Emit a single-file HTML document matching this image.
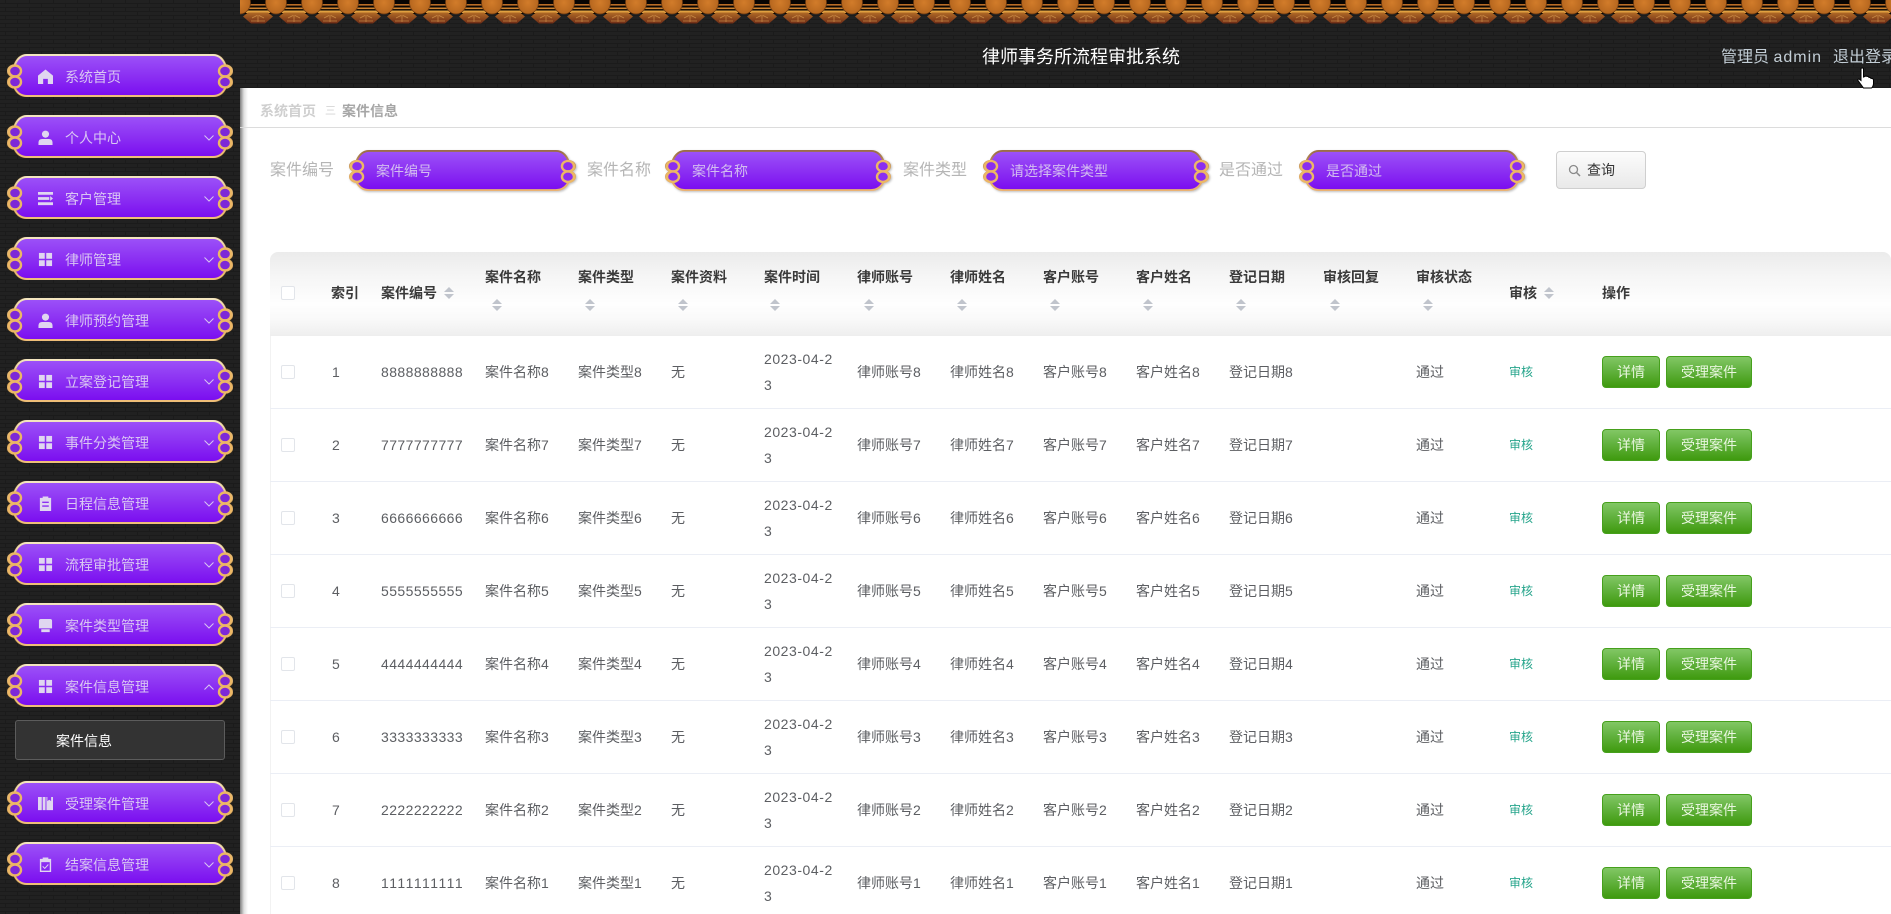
<!DOCTYPE html>
<html lang="zh">
<head>
<meta charset="utf-8">
<title>律师事务所流程审批系统</title>
<style>
*{box-sizing:border-box;margin:0;padding:0}
html,body{width:1891px;height:914px;overflow:hidden;background:#fff;font-family:"Liberation Sans","Noto Sans CJK SC",sans-serif;font-size:14px;font-kerning:none}
#wrap{position:relative;width:1891px;height:914px;overflow:hidden}
.a{position:absolute;white-space:nowrap}
#tex{position:absolute;left:0;top:0;width:1891px;height:914px}
#main{position:absolute;left:240px;top:88px;width:1651px;height:826px;background:#fff}
#sh{position:absolute;left:240px;top:88px;width:8px;height:826px;background:linear-gradient(to right,rgba(0,0,0,.5),rgba(0,0,0,.12) 50%,rgba(0,0,0,0))}
.m{position:absolute;left:7px;width:226px;height:43px}
.m>svg.b{position:absolute;left:0;top:0;width:226px;height:43px;overflow:visible}
.m>svg.i{position:absolute;left:30.5px;top:15px;width:15px;height:15px;fill:#e0d6f0}
.m>span{position:absolute;left:58px;top:2px;line-height:43px;font-size:14px;color:#d9c6f3;white-space:nowrap}
.m>svg.c{position:absolute;left:197px;top:20px;width:10px;height:6px;fill:none;stroke:#d8c4f2;stroke-width:1}
.inp{position:absolute;top:150px;height:41px}
.inp svg{position:absolute;left:0;top:0;width:100%;height:100%;overflow:visible}
.inp span{position:absolute;left:27px;top:1px;line-height:40px;color:#d3bdf0;font-size:14px;white-space:nowrap}
.lab{position:absolute;top:159px;font-size:16px;line-height:24px;color:#b5b5b5;white-space:nowrap}
#th{position:absolute;left:270px;top:252px;width:1621px;height:84px;border-radius:8px 8px 0 0;background:linear-gradient(#ebebeb 0,#f6f6f6 30%,#fefefe 62%,#f9f9f9 80%,#eeeeee 100%)}
.h{position:absolute;font-weight:bold;color:#3a3a3a;font-size:14px;line-height:20px;white-space:nowrap}
.s{position:absolute;width:10px;height:12px}
.s:before,.s:after{content:"";position:absolute;left:0;border-left:5px solid transparent;border-right:5px solid transparent}
.s:before{top:0;border-bottom:5px solid #c0c4cc}
.s:after{top:7px;border-top:5px solid #c0c4cc}
.cb{position:absolute;width:14px;height:14px;border:1px solid #e2e5ea;border-radius:2px;background:#fff}
.r{position:absolute;left:270px;width:1621px;height:73px;border-bottom:1px solid #ebeef5;box-shadow:inset 1px 0 0 #f2f2f2;color:#606266;background:#fff}
.r>*{position:absolute}
.r>span{top:0;line-height:72px;white-space:nowrap;color:#5c5e62}
.r>span.n{letter-spacing:.42px}
.r>span.d{top:10px;line-height:26px;letter-spacing:.55px}
.r>span.k{font-size:12px;color:#27a58c}
.r>b{top:20px;height:32px;line-height:30px;text-align:center;font-weight:normal;font-size:14px;color:#e9f6df;border:1px solid #46a01c;border-radius:4px;background:linear-gradient(#82c765,#62b23f 45%,#3f9a0e)}
.c1{left:62px}.c2{left:111px}.c3{left:215px}.c4{left:308px}.c5{left:401px}.c7{left:587px}.c8{left:680px}.c9{left:773px}.c10{left:866px}.c11{left:959px}.c13{left:1146px}.c14{left:1239px}
.b1{left:1332px;width:58px}.b2{left:1396px;width:86px}
.r>i.cb{left:11px;top:29px}
.r>span.d{left:494px}
</style>
</head>
<body>
<div id="wrap">
<svg width="0" height="0" style="position:absolute">
<defs>
<linearGradient id="pf" x1="0" y1="0" x2="0" y2="1"><stop offset="0" stop-color="#9c52f8"/><stop offset=".55" stop-color="#8a2df2"/><stop offset="1" stop-color="#7a0cf0"/></linearGradient>
<linearGradient id="gs" x1="0" y1="0" x2="0" y2="1"><stop offset="0" stop-color="#f4e6c0"/><stop offset=".5" stop-color="#d9a860"/><stop offset="1" stop-color="#efbe78"/></linearGradient>
<linearGradient id="gi" x1="0" y1="0" x2="0" y2="1"><stop offset="0" stop-color="#9a6c48"/><stop offset=".5" stop-color="#d8a660"/><stop offset="1" stop-color="#eab273"/></linearGradient>
<linearGradient id="hexg" x1="0" y1="0" x2="0" y2="1"><stop offset="0" stop-color="#b06a26"/><stop offset="1" stop-color="#6e2c16"/></linearGradient>
<radialGradient id="ovg" cx=".5" cy=".5" r=".6"><stop offset="0" stop-color="#d27c2a"/><stop offset="1" stop-color="#b0621c"/></radialGradient>
<path id="shape" d="M20 1H206C212 1 216 5 218.500 11.500A6.500 5.500 0 0 1 218.500 22.500A6.500 5.500 0 0 1 218.500 33.500C216 39 212 42 206 42H20C14 42 10 39 7.500 33.500A6.500 5.500 0 0 1 7.500 22.500A6.500 5.500 0 0 1 7.500 11.500C10 5 14 1 20 1Z"/>
<symbol id="mb" viewBox="0 0 226 43" preserveAspectRatio="none">
<use href="#shape" fill="#a87030" stroke="#7a5a28" stroke-width="3" opacity=".6"/>
<use href="#shape" fill="url(#pf)" stroke="url(#gs)" stroke-width="2"/>
<g fill="#7d28d8" stroke="#ecb765" stroke-width="2.400"><ellipse cx="8" cy="17" rx="6" ry="5.500"/><ellipse cx="8" cy="28" rx="6" ry="5.500"/><ellipse cx="218" cy="17" rx="6" ry="5.500"/><ellipse cx="218" cy="28" rx="6" ry="5.500"/></g>
</symbol>
<symbol id="ib" viewBox="0 0 226 43" preserveAspectRatio="none">
<use href="#shape" fill="url(#pf)" stroke="url(#gi)" stroke-width="2"/>
<g fill="#8a2df0" stroke="#ecb765" stroke-width="2.400"><ellipse cx="8" cy="17" rx="6" ry="5.500"/><ellipse cx="8" cy="28" rx="6" ry="5.500"/><ellipse cx="218" cy="17" rx="6" ry="5.500"/><ellipse cx="218" cy="28" rx="6" ry="5.500"/></g>
</symbol>
<symbol id="grid" viewBox="0 0 16 16"><rect x="1" y="1" width="6.200" height="6.200"/><rect x="8.800" y="1" width="6.200" height="6.200"/><rect x="1" y="8.800" width="6.200" height="6.200"/><rect x="8.800" y="8.800" width="6.200" height="6.200"/></symbol>
<symbol id="user" viewBox="0 0 16 16"><circle cx="8" cy="4.400" r="3.800"/><path d="M0.500 16V13.500Q.5 9.600 4.500 9.600H11.500Q15.500 9.600 15.500 13.500V16Z"/></symbol>
<pattern id="brick" width="24" height="8" patternUnits="userSpaceOnUse">
<rect width="24" height="8" fill="#212121"/>
<path d="M0 3.500H24M0 7.500H24M5.500 0V3.500M17.500 4V7.500" stroke="#1b1b1b" stroke-width="1"/>
</pattern>
<pattern id="roof" x="240" y="0" width="36" height="24" patternUnits="userSpaceOnUse">
<rect width="36" height="14" fill="#080503"/>
<rect x="6" y="4" width="24" height="1.600" fill="#b86c26"/>
<rect x="6" y="7.500" width="24" height="1.600" fill="#cc8230"/>
<rect x="6" y="10.500" width="24" height="2.500" fill="#e0a040"/>
<polygon points="8,12.500 28,12.500 33,16.500 25,23.500 11,23.500 3,16.500" fill="url(#hexg)"/>
<path d="M12 18L17 15.500M24 18L19 15.500M11 21H25M18 15V22" stroke="#d8984e" stroke-width=".8" fill="none" opacity=".75"/>
<ellipse cx="0" cy="2.500" rx="10.500" ry="11.500" fill="url(#ovg)" stroke="#6e3a10" stroke-width=".8"/>
<ellipse cx="36" cy="2.500" rx="10.500" ry="11.500" fill="url(#ovg)" stroke="#6e3a10" stroke-width=".8"/>
</pattern>
</defs>
</svg>

<svg id="tex"><rect width="1891" height="914" fill="url(#brick)"/><rect x="240" width="1651" height="24" fill="url(#roof)"/></svg>

<div class="a" style="left:982px;top:44px;font-size:18px;line-height:26px;color:#fff">律师事务所流程审批系统</div>
<div class="a" style="left:1721px;top:47px;font-size:16px;line-height:22px;color:#c3ced6">管理员 <span style="letter-spacing:1px">admin</span></div>
<div class="a" style="left:1833px;top:47px;font-size:16px;line-height:22px;color:#c3ced6">退出登录</div>

<div class="m" style="top:54px"><svg class="b"><use href="#mb" width="226" height="43"/></svg><svg class="i" viewBox="0 0 16 16"><path d="M8 .5L16 7V16H10.500V10.500H5.500V16H0V7Z"/></svg><span>系统首页</span></div>
<div class="m" style="top:115px"><svg class="b"><use href="#mb" width="226" height="43"/></svg><svg class="i"><use href="#user" width="15" height="15"/></svg><span>个人中心</span><svg class="c" viewBox="0 0 10 6"><path d="M.5.5L5 5L9.500.5"/></svg></div>
<div class="m" style="top:176px"><svg class="b"><use href="#mb" width="226" height="43"/></svg><svg class="i" viewBox="0 0 16 16"><path d="M0 1H16V4H0ZM0 6.500H12V9.500H0ZM13 5.500L16 8L13 10.500ZM0 12H16V15H0Z"/></svg><span>客户管理</span><svg class="c" viewBox="0 0 10 6"><path d="M.5.5L5 5L9.500.5"/></svg></div>
<div class="m" style="top:237px"><svg class="b"><use href="#mb" width="226" height="43"/></svg><svg class="i"><use href="#grid" width="15" height="15"/></svg><span>律师管理</span><svg class="c" viewBox="0 0 10 6"><path d="M.5.5L5 5L9.500.5"/></svg></div>
<div class="m" style="top:298px"><svg class="b"><use href="#mb" width="226" height="43"/></svg><svg class="i"><use href="#user" width="15" height="15"/></svg><span>律师预约管理</span><svg class="c" viewBox="0 0 10 6"><path d="M.5.5L5 5L9.500.5"/></svg></div>
<div class="m" style="top:359px"><svg class="b"><use href="#mb" width="226" height="43"/></svg><svg class="i"><use href="#grid" width="15" height="15"/></svg><span>立案登记管理</span><svg class="c" viewBox="0 0 10 6"><path d="M.5.5L5 5L9.500.5"/></svg></div>
<div class="m" style="top:420px"><svg class="b"><use href="#mb" width="226" height="43"/></svg><svg class="i"><use href="#grid" width="15" height="15"/></svg><span>事件分类管理</span><svg class="c" viewBox="0 0 10 6"><path d="M.5.5L5 5L9.500.5"/></svg></div>
<div class="m" style="top:481px"><svg class="b"><use href="#mb" width="226" height="43"/></svg><svg class="i" viewBox="0 0 16 16"><path fill-rule="evenodd" d="M2 2H5V.5H11V2H14V16H2ZM4.500 6V7.500H11.500V6ZM4.500 10V11.500H11.500V10Z"/></svg><span>日程信息管理</span><svg class="c" viewBox="0 0 10 6"><path d="M.5.5L5 5L9.500.5"/></svg></div>
<div class="m" style="top:542px"><svg class="b"><use href="#mb" width="226" height="43"/></svg><svg class="i"><use href="#grid" width="15" height="15"/></svg><span>流程审批管理</span><svg class="c" viewBox="0 0 10 6"><path d="M.5.5L5 5L9.500.5"/></svg></div>
<div class="m" style="top:603px"><svg class="b"><use href="#mb" width="226" height="43"/></svg><svg class="i" viewBox="0 0 16 16"><path d="M3 1H13Q15 1 15 3V11H1V3Q1 1 3 1ZM3.500 12H12.500V15H3.500Z"/></svg><span>案件类型管理</span><svg class="c" viewBox="0 0 10 6"><path d="M.5.5L5 5L9.500.5"/></svg></div>
<div class="m" style="top:664px"><svg class="b"><use href="#mb" width="226" height="43"/></svg><svg class="i"><use href="#grid" width="15" height="15"/></svg><span>案件信息管理</span><svg class="c" viewBox="0 0 10 6"><path d="M.5 5.500L5 1L9.500 5.500"/></svg></div>
<div class="a" style="left:15px;top:720px;width:210px;height:40px;background:#333;border:1px solid #5c5c5c;border-radius:3px;color:#fff;font-size:14px;line-height:40px;padding-left:40px">案件信息</div>
<div class="m" style="top:781px"><svg class="b"><use href="#mb" width="226" height="43"/></svg><svg class="i" viewBox="0 0 16 16"><path d="M0 1H4V15H0ZM5 1H8V15H5ZM10 1V5.500L12 4L14 5.500V1H16V15H9V1Z"/></svg><span>受理案件管理</span><svg class="c" viewBox="0 0 10 6"><path d="M.5.5L5 5L9.500.5"/></svg></div>
<div class="m" style="top:842px"><svg class="b"><use href="#mb" width="226" height="43"/></svg><svg class="i" viewBox="0 0 16 16"><path fill-rule="evenodd" d="M2 2H5V.5H11V2H14V16H2ZM3.500 5.500V14.500H12.500V5.500Z"/><path d="M5 10L7.200 12.200L11 8" fill="none" stroke="#e0d6f0" stroke-width="1"/></svg><span>结案信息管理</span><svg class="c" viewBox="0 0 10 6"><path d="M.5.5L5 5L9.500.5"/></svg></div>

<div id="main"></div>
<div id="sh"></div>
<div class="a" style="left:240px;top:127px;width:1651px;height:1px;background:#dcdcdc"></div>
<div class="a" style="left:260px;top:101px;line-height:20px;font-size:14px;font-weight:bold;color:#cfcfcf">系统首页</div>
<div class="a" style="left:325px;top:101px;line-height:20px;font-size:11px;color:#d5d5d5">三</div>
<div class="a" style="left:342px;top:101px;line-height:20px;font-size:14px;font-weight:bold;color:#a6a6a6">案件信息</div>

<div class="lab" style="left:270px">案件编号</div>
<div class="inp" style="left:349px;width:227px;filter:drop-shadow(1px 1px 1px rgba(0,0,0,.25))"><svg><use href="#ib" width="100%" height="100%"/></svg><span>案件编号</span></div>
<div class="lab" style="left:587px">案件名称</div>
<div class="inp" style="left:665px;width:226px;filter:drop-shadow(1px 1px 1px rgba(0,0,0,.25))"><svg><use href="#ib" width="100%" height="100%"/></svg><span>案件名称</span></div>
<div class="lab" style="left:903px">案件类型</div>
<div class="inp" style="left:983px;width:226px;filter:drop-shadow(1px 1px 1px rgba(0,0,0,.25))"><svg><use href="#ib" width="100%" height="100%"/></svg><span>请选择案件类型</span></div>
<div class="lab" style="left:1219px">是否通过</div>
<div class="inp" style="left:1299px;width:226px;filter:drop-shadow(1px 1px 1px rgba(0,0,0,.25))"><svg><use href="#ib" width="100%" height="100%"/></svg><span>是否通过</span></div>
<div class="a" style="left:1556px;top:151px;width:90px;height:38px;border:1px solid #cfcfcf;border-radius:4px;background:linear-gradient(#fcfcfc,#e9e9e9);color:#333;font-size:14px;line-height:36px;padding-left:30px">查询</div>
<svg class="a" style="left:1568px;top:164px" width="13" height="13" viewBox="0 0 13 13"><circle cx="5.500" cy="5.500" r="4" fill="none" stroke="#8a8a8a" stroke-width="1.300"/><path d="M8.500 8.500L12 12" stroke="#8a8a8a" stroke-width="1.500"/></svg>

<div id="th"></div>
<div class="cb" style="left:281px;top:286px"></div>
<div class="h" style="left:331px;top:283px">索引</div>
<div class="h" style="left:381px;top:283px">案件编号</div><i class="s" style="left:444px;top:287px"></i>
<div class="h" style="left:485px;top:267px">案件名称</div><i class="s" style="left:492px;top:299px"></i>
<div class="h" style="left:578px;top:267px">案件类型</div><i class="s" style="left:585px;top:299px"></i>
<div class="h" style="left:671px;top:267px">案件资料</div><i class="s" style="left:678px;top:299px"></i>
<div class="h" style="left:764px;top:267px">案件时间</div><i class="s" style="left:770px;top:299px"></i>
<div class="h" style="left:857px;top:267px">律师账号</div><i class="s" style="left:864px;top:299px"></i>
<div class="h" style="left:950px;top:267px">律师姓名</div><i class="s" style="left:957px;top:299px"></i>
<div class="h" style="left:1043px;top:267px">客户账号</div><i class="s" style="left:1050px;top:299px"></i>
<div class="h" style="left:1136px;top:267px">客户姓名</div><i class="s" style="left:1143px;top:299px"></i>
<div class="h" style="left:1229px;top:267px">登记日期</div><i class="s" style="left:1236px;top:299px"></i>
<div class="h" style="left:1323px;top:267px">审核回复</div><i class="s" style="left:1330px;top:299px"></i>
<div class="h" style="left:1416px;top:267px">审核状态</div><i class="s" style="left:1423px;top:299px"></i>
<div class="h" style="left:1509px;top:283px">审核</div><i class="s" style="left:1544px;top:287px"></i>
<div class="h" style="left:1602px;top:283px">操作</div>

<div class="r" style="top:336px"><i class="cb"></i><span class="c1">1</span><span class="c2 n">8888888888</span><span class="c3">案件名称8</span><span class="c4">案件类型8</span><span class="c5">无</span><span class="d">2023-04-2<br>3</span><span class="c7">律师账号8</span><span class="c8">律师姓名8</span><span class="c9">客户账号8</span><span class="c10">客户姓名8</span><span class="c11">登记日期8</span><span class="c13">通过</span><span class="c14 k">审核</span><b class="b1">详情</b><b class="b2">受理案件</b></div>
<div class="r" style="top:409px"><i class="cb"></i><span class="c1">2</span><span class="c2 n">7777777777</span><span class="c3">案件名称7</span><span class="c4">案件类型7</span><span class="c5">无</span><span class="d">2023-04-2<br>3</span><span class="c7">律师账号7</span><span class="c8">律师姓名7</span><span class="c9">客户账号7</span><span class="c10">客户姓名7</span><span class="c11">登记日期7</span><span class="c13">通过</span><span class="c14 k">审核</span><b class="b1">详情</b><b class="b2">受理案件</b></div>
<div class="r" style="top:482px"><i class="cb"></i><span class="c1">3</span><span class="c2 n">6666666666</span><span class="c3">案件名称6</span><span class="c4">案件类型6</span><span class="c5">无</span><span class="d">2023-04-2<br>3</span><span class="c7">律师账号6</span><span class="c8">律师姓名6</span><span class="c9">客户账号6</span><span class="c10">客户姓名6</span><span class="c11">登记日期6</span><span class="c13">通过</span><span class="c14 k">审核</span><b class="b1">详情</b><b class="b2">受理案件</b></div>
<div class="r" style="top:555px"><i class="cb"></i><span class="c1">4</span><span class="c2 n">5555555555</span><span class="c3">案件名称5</span><span class="c4">案件类型5</span><span class="c5">无</span><span class="d">2023-04-2<br>3</span><span class="c7">律师账号5</span><span class="c8">律师姓名5</span><span class="c9">客户账号5</span><span class="c10">客户姓名5</span><span class="c11">登记日期5</span><span class="c13">通过</span><span class="c14 k">审核</span><b class="b1">详情</b><b class="b2">受理案件</b></div>
<div class="r" style="top:628px"><i class="cb"></i><span class="c1">5</span><span class="c2 n">4444444444</span><span class="c3">案件名称4</span><span class="c4">案件类型4</span><span class="c5">无</span><span class="d">2023-04-2<br>3</span><span class="c7">律师账号4</span><span class="c8">律师姓名4</span><span class="c9">客户账号4</span><span class="c10">客户姓名4</span><span class="c11">登记日期4</span><span class="c13">通过</span><span class="c14 k">审核</span><b class="b1">详情</b><b class="b2">受理案件</b></div>
<div class="r" style="top:701px"><i class="cb"></i><span class="c1">6</span><span class="c2 n">3333333333</span><span class="c3">案件名称3</span><span class="c4">案件类型3</span><span class="c5">无</span><span class="d">2023-04-2<br>3</span><span class="c7">律师账号3</span><span class="c8">律师姓名3</span><span class="c9">客户账号3</span><span class="c10">客户姓名3</span><span class="c11">登记日期3</span><span class="c13">通过</span><span class="c14 k">审核</span><b class="b1">详情</b><b class="b2">受理案件</b></div>
<div class="r" style="top:774px"><i class="cb"></i><span class="c1">7</span><span class="c2 n">2222222222</span><span class="c3">案件名称2</span><span class="c4">案件类型2</span><span class="c5">无</span><span class="d">2023-04-2<br>3</span><span class="c7">律师账号2</span><span class="c8">律师姓名2</span><span class="c9">客户账号2</span><span class="c10">客户姓名2</span><span class="c11">登记日期2</span><span class="c13">通过</span><span class="c14 k">审核</span><b class="b1">详情</b><b class="b2">受理案件</b></div>
<div class="r" style="top:847px"><i class="cb"></i><span class="c1">8</span><span class="c2 n">1111111111</span><span class="c3">案件名称1</span><span class="c4">案件类型1</span><span class="c5">无</span><span class="d">2023-04-2<br>3</span><span class="c7">律师账号1</span><span class="c8">律师姓名1</span><span class="c9">客户账号1</span><span class="c10">客户姓名1</span><span class="c11">登记日期1</span><span class="c13">通过</span><span class="c14 k">审核</span><b class="b1">详情</b><b class="b2">受理案件</b></div>

<svg class="a" style="left:1857px;top:67px" width="18" height="22" viewBox="0 0 18 22"><path d="M4 1.500Q5.500 .5 6.500 1.500V10L8 9.500Q9 8.500 10 9.500Q11.500 9 12 10.500Q13.500 10 14 11.500Q16 11 16.500 13V17Q16 20 14.500 21H6.500L1 13.500Q.5 12 2 12L4 13.500Z" fill="#fff" stroke="#000" stroke-width="1"/></svg>
</div>
</body>
</html>
